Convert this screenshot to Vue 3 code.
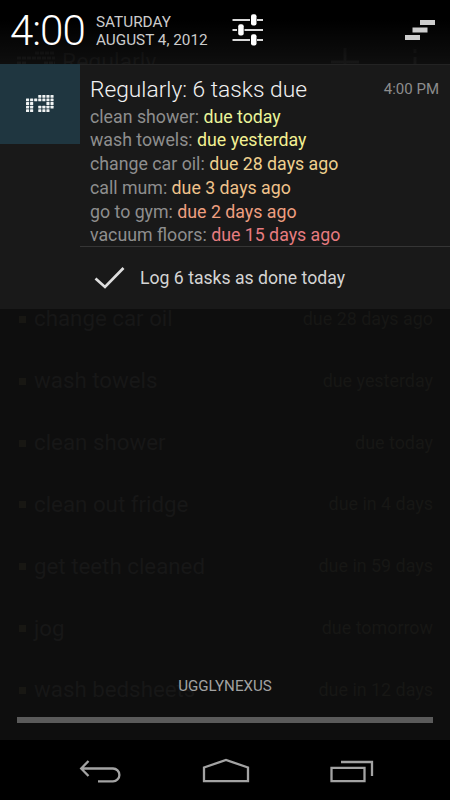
<script setup>
const tasks = [
  { name: 'change car oil', due: 'due 28 days ago' },
  { name: 'wash towels', due: 'due yesterday' },
  { name: 'clean shower', due: 'due today' },
  { name: 'clean out fridge', due: 'due in 4 days' },
  { name: 'get teeth cleaned', due: 'due in 59 days' },
  { name: 'jog', due: 'due tomorrow' },
  { name: 'wash bedsheets', due: 'due in 12 days' },
]
const lines = [
  { name: 'clean shower:', due: 'due today', tone: 'lime' },
  { name: 'wash towels:', due: 'due yesterday', tone: 'yellow' },
  { name: 'change car oil:', due: 'due 28 days ago', tone: 'gold' },
  { name: 'call mum:', due: 'due 3 days ago', tone: 'amber' },
  { name: 'go to gym:', due: 'due 2 days ago', tone: 'orange' },
  { name: 'vacuum floors:', due: 'due 15 days ago', tone: 'red' },
]
const pattern = ['...####', '#######', '##...##', '##.####', '##.###.']
const dots = pattern.flatMap((row, y) =>
  [...row].flatMap((c, x) => (c === '#' ? [{ x: x * 4.08, y: y * 3.55 }] : []))
)
</script>

<template>
  <div class="device">
    <main class="app">
      <header class="app-bar">
        <svg class="app-logo" width="38" height="22" viewBox="0 0 38 22">
          <path d="M18 2h20M0 7h38M0 12h9M27 12h11M0 17h9M14 17h24" stroke="currentColor" stroke-width="3" stroke-dasharray="4 1" />
        </svg>
        <span class="app-name">Regularly</span>
        <svg class="app-actions" width="100" height="32" viewBox="0 0 100 32">
          <path d="M15 2v28M1 16h28M85 3v4M85 11v18" stroke="currentColor" stroke-width="3" />
        </svg>
      </header>
      <ul class="tasks">
        <li v-for="t in tasks" :key="t.name" class="task">
          <i class="bullet"></i>
          <span class="task-name">{{ t.name }}</span>
          <span class="task-due">{{ t.due }}</span>
        </li>
      </ul>
    </main>

    <section class="shade">
      <header class="status">
        <time class="clock">4:00</time>
        <div class="date"><span>SATURDAY</span><span>AUGUST 4, 2012</span></div>
        <svg class="settings" width="32" height="34" viewBox="0 0 32 34">
          <path d="M.5 7H18M25 7h6M.5 17H5M12.500 17H31M.5 27H18M25 27h6" stroke="#d8d8d8" stroke-width="2" />
          <g fill="#fff">
            <rect x="19" y="1.300" width="5.500" height="11.200" rx="2" />
            <rect x="6.200" y="11.300" width="5.500" height="11.200" rx="2" />
            <rect x="19" y="21.300" width="5.500" height="11.200" rx="2" />
          </g>
        </svg>
        <svg class="clear" width="30" height="20" viewBox="0 0 30 20">
          <path d="M15 0h15v5H15zM7.500 7.500h15v5h-15zM0 15h15v5H0z" fill="#cdcdcd" />
        </svg>
      </header>

      <article class="notification">
        <div class="thumb">
          <svg width="28" height="18" viewBox="0 0 28 18">
            <rect v-for="(d, i) in dots" :key="i" :x="d.x" :y="d.y" width="3.100" height="2.800" rx=".5" fill="#f1f4f4" />
          </svg>
        </div>
        <div class="content">
          <div class="heading">
            <h1>Regularly: 6 tasks due</h1>
            <time>4:00 PM</time>
          </div>
          <p v-for="l in lines" :key="l.name" class="line">
            {{ l.name }} <span :class="l.tone">{{ l.due }}</span>
          </p>
          <div class="action">
            <svg width="32" height="24" viewBox="0 0 32 24">
              <path d="M1.500 12.500l9.500 8.500L29.500 2" fill="none" stroke="#dedede" stroke-width="2.700" />
            </svg>
            <span>Log 6 tasks as done today</span>
          </div>
        </div>
      </article>

      <footer class="carrier">
        <span>UGGLYNEXUS</span>
        <div class="handle"></div>
      </footer>
    </section>

    <nav class="nav">
      <svg width="44" height="26" viewBox="0 0 44 26">
        <path d="M2 10.500h32a6.300 6.300 0 0 1 0 12.800H19M9.500 3L2.200 10.500l7.300 7.500" />
      </svg>
      <svg width="48" height="26" viewBox="0 0 48 26">
        <path d="M2 23.200V9.500L24 2l22 7.500v13.700z" />
      </svg>
      <svg width="44" height="26" viewBox="0 0 44 26">
        <path d="M1.500 9.800h33v13.400h-33zM11 4h31v14" />
      </svg>
    </nav>
  </div>
</template>

<style>
body {
  margin: 0;
  background: #000;
}
</style>

<style scoped>
.device {
  width: 450px;
  height: 800px;
  display: grid;
  grid-template: 740px 60px / 450px;
  overflow: hidden;
  background: #000;
  font-family: Roboto, sans-serif;
}
.app,
.shade {
  grid-area: 1 / 1;
  min-height: 0;
  overflow: hidden;
}
.app {
  background: #0e0e0e;
  color: #171717;
}
.app-bar {
  height: 90px;
  padding: 34px 20px 0 17px;
  box-sizing: border-box;
  display: flex;
  align-items: center;
  font-size: 23px;
}
.app-name {
  margin-left: 7px;
}
.app-actions {
  margin-left: auto;
}
.tasks {
  list-style: none;
  margin: 0;
  padding: 197.500px 17px 0 18px;
}
.task {
  height: 61.85px;
  display: flex;
  align-items: center;
}
.bullet {
  width: 7px;
  height: 7px;
  margin: 2px 8px 0 1px;
  background: #181713;
}
.task-name {
  font-size: 22.300px;
}
.task-due {
  margin-left: auto;
  font-size: 17.900px;
  color: #171715;
}
.shade {
  display: flex;
  flex-direction: column;
  background: linear-gradient(#000 0, #000 20px, transparent 64px);
}
.status {
  height: 64px;
  flex: none;
  box-sizing: border-box;
  padding: 0 15px 4px 10px;
  display: flex;
  align-items: center;
}
.clock {
  width: 86px;
  color: #fff;
  font-size: 42px;
  font-weight: 300;
  line-height: 60px;
  letter-spacing: -1px;
  padding-top: 2px;
}
.date {
  display: flex;
  flex-direction: column;
  width: 136px;
  padding-top: 1px;
  color: #ccc;
  font-size: 15.300px;
  line-height: 18px;
  white-space: nowrap;
}
.clear {
  margin-left: auto;
}
.notification {
  height: 245px;
  flex: none;
  display: flex;
  background: #191919;
  box-shadow: inset 0 1px #232323;
}
.thumb {
  width: 80px;
  height: 80px;
  flex: none;
  display: grid;
  place-items: center;
  background: #1f3640;
}
.content {
  flex: 1;
}
.heading {
  height: 41.500px;
  padding: 0 11px 0 10px;
  display: flex;
  justify-content: space-between;
  align-items: flex-start;
}
h1 {
  margin: 0;
  color: #f2f2f2;
  font-size: 22.750px;
  font-weight: 300;
  line-height: 52px;
}
.heading time {
  color: #8d8d8d;
  font-size: 15px;
  line-height: 51px;
}
.line {
  margin: 0;
  padding-left: 10px;
  color: #8e8e8e;
  font-size: 17.760px;
  line-height: 23.750px;
  white-space: nowrap;
}
.lime { color: #eaf59a; }
.yellow { color: #f2f093; }
.gold { color: #efd08e; }
.amber { color: #efc28b; }
.orange { color: #ee9f80; }
.red { color: #e77c80; }
.action {
  height: 61px;
  margin-top: -2px;
  display: flex;
  align-items: center;
  gap: 14px;
  padding-left: 14px;
  border-top: 1px solid #353535;
  color: #d4d4d4;
  font-size: 17.650px;
}
.carrier {
  margin-top: auto;
  padding: 0 17px 17px;
  display: flex;
  flex-direction: column;
  align-items: center;
  color: #a2a2a2;
  font-size: 15.150px;
}
.handle {
  align-self: stretch;
  height: 6px;
  margin-top: 22px;
  background: #5a5a5a;
}
.nav {
  grid-area: 2 / 1;
  display: flex;
  justify-content: space-between;
  align-items: center;
  padding: 2px 76px 0 79px;
  background: #000;
}
.nav svg:nth-child(2) {
  margin-right: 2px;
}
.nav path {
  fill: none;
  stroke: #a3a3a3;
  stroke-width: 2.300;
}
</style>
